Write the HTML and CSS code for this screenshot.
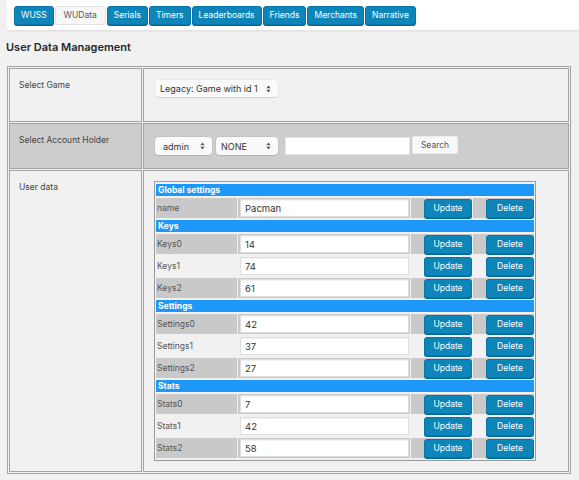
FILE: index.html
```html
<!DOCTYPE html>
<html lang="en">
<head>
<meta charset="utf-8">
<title>WUData – User Data Management</title>
<link rel="stylesheet" href="styles.css">
</head>
<body>
<div class="wrap">
  <nav class="tabs">
    <a class="tab">WUSS</a>
    <a class="tab tab-current">WUData</a>
    <a class="tab">Serials</a>
    <a class="tab">Timers</a>
    <a class="tab">Leaderboards</a>
    <a class="tab">Friends</a>
    <a class="tab">Merchants</a>
    <a class="tab">Narrative</a>
  </nav>

  <h2 class="title">User Data Management</h2>

  <table class="manage">
    <tr class="game">
      <th>Select Game</th>
      <td>
        <span class="picker picker-game">
          <select class="picker-field"><option>Legacy: Game with id 1</option></select>
          <svg class="picker-arrows" width="5" height="8" viewBox="0 0 5 8"><polygon points="0.4,3.3 2.5,0.4 4.6,3.3"/><polygon points="0.4,4.7 2.5,7.6 4.6,4.7"/></svg>
        </span>
      </td>
    </tr>
    <tr class="holder">
      <th>Select Account Holder</th>
      <td>
        <div class="holder-controls">
          <span class="picker picker-user">
            <select class="picker-field"><option>admin</option></select>
            <svg class="picker-arrows" width="5" height="8" viewBox="0 0 5 8"><polygon points="0.4,3.3 2.5,0.4 4.6,3.3"/><polygon points="0.4,4.7 2.5,7.6 4.6,4.7"/></svg>
          </span>
          <span class="picker picker-role">
            <select class="picker-field"><option>NONE</option></select>
            <svg class="picker-arrows" width="5" height="8" viewBox="0 0 5 8"><polygon points="0.4,3.3 2.5,0.4 4.6,3.3"/><polygon points="0.4,4.7 2.5,7.6 4.6,4.7"/></svg>
          </span>
          <input class="search-field" type="text">
          <button class="search-btn" type="button">Search</button>
        </div>
      </td>
    </tr>
    <tr class="userdata">
      <th>User data</th>
      <td>
        <table class="data">
          <tr class="group"><th colspan="4">Global settings</th></tr>
          <tr class="shade">
            <td class="key">name</td>
            <td class="val"><input type="text" value="Pacman"></td>
            <td class="act"><button class="btn" type="button">Update</button></td>
            <td class="act"><button class="btn" type="button">Delete</button></td>
          </tr>

          <tr class="group"><th colspan="4">Keys</th></tr>
          <tr class="shade">
            <td class="key">Keys0</td>
            <td class="val"><input type="text" value="14"></td>
            <td class="act"><button class="btn" type="button">Update</button></td>
            <td class="act"><button class="btn" type="button">Delete</button></td>
          </tr>
          <tr>
            <td class="key">Keys1</td>
            <td class="val"><input type="text" value="74"></td>
            <td class="act"><button class="btn" type="button">Update</button></td>
            <td class="act"><button class="btn" type="button">Delete</button></td>
          </tr>
          <tr class="shade">
            <td class="key">Keys2</td>
            <td class="val"><input type="text" value="61"></td>
            <td class="act"><button class="btn" type="button">Update</button></td>
            <td class="act"><button class="btn" type="button">Delete</button></td>
          </tr>

          <tr class="group"><th colspan="4">Settings</th></tr>
          <tr class="shade">
            <td class="key">Settings0</td>
            <td class="val"><input type="text" value="42"></td>
            <td class="act"><button class="btn" type="button">Update</button></td>
            <td class="act"><button class="btn" type="button">Delete</button></td>
          </tr>
          <tr>
            <td class="key">Settings1</td>
            <td class="val"><input type="text" value="37"></td>
            <td class="act"><button class="btn" type="button">Update</button></td>
            <td class="act"><button class="btn" type="button">Delete</button></td>
          </tr>
          <tr class="shade">
            <td class="key">Settings2</td>
            <td class="val"><input type="text" value="27"></td>
            <td class="act"><button class="btn" type="button">Update</button></td>
            <td class="act"><button class="btn" type="button">Delete</button></td>
          </tr>

          <tr class="group"><th colspan="4">Stats</th></tr>
          <tr class="shade">
            <td class="key">Stats0</td>
            <td class="val"><input type="text" value="7"></td>
            <td class="act"><button class="btn" type="button">Update</button></td>
            <td class="act"><button class="btn" type="button">Delete</button></td>
          </tr>
          <tr>
            <td class="key">Stats1</td>
            <td class="val"><input type="text" value="42"></td>
            <td class="act"><button class="btn" type="button">Update</button></td>
            <td class="act"><button class="btn" type="button">Delete</button></td>
          </tr>
          <tr class="shade">
            <td class="key">Stats2</td>
            <td class="val"><input type="text" value="58"></td>
            <td class="act"><button class="btn" type="button">Update</button></td>
            <td class="act"><button class="btn" type="button">Delete</button></td>
          </tr>
        </table>
      </td>
    </tr>
  </table>
</div>
</body>
</html>
```

FILE: styles.css
```css
* {
  box-sizing: border-box;
}

html,
body {
  margin: 0;
  padding: 0;
  background: #f1f1f1;
}

body {
  font-family: "Inter", "Liberation Sans", sans-serif;
  font-size: 8.5px;
  color: #444;
  overflow: hidden;
}

.wrap {
  padding-left: 7px;
}

/* ---- top tab strip ---- */
.tabs {
  display: flex;
  gap: 1px;
  background: #fff;
  padding: 6px 0 5px 7px;
  border-bottom: 1px solid #e2e2e2;
  box-shadow: 0 1px 1px rgba(0, 0, 0, 0.04);
}

.tab {
  display: block;
  height: 19px;
  padding: 0 6px;
  line-height: 17px;
  font-size: 8.5px;
  color: #fff;
  background: #0e85b9;
  border: 1px solid #0a74a6;
  border-radius: 3px;
  box-shadow: 0 1px 0 #006799;
  text-decoration: none;
}

.tab-current {
  padding: 0 8px;
  color: #555;
  background: #f7f7f7;
  border-color: #e2e2e2;
  box-shadow: none;
}

/* ---- heading ---- */
.title {
  margin: 9px 0 12px -1px;
  font-size: 11px;
  line-height: 14px;
  font-weight: 600;
  color: #23282d;
}

/* ---- outer management table ---- */
.manage {
  width: 564px;
  border: 1px solid #a3a3a3;
  border-spacing: 1px;
}

.manage > tbody > tr > th,
.manage > tbody > tr > td {
  border: 1px solid #a3a3a3;
  padding: 10px 11px;
  vertical-align: top;
  text-align: left;
}

.manage > tbody > tr > th {
  width: 133px;
  padding-left: 9px;
  font-weight: normal;
  color: #444;
  line-height: 12px;
}

.game > th,
.game > td {
  height: 54px;
}

.holder > th,
.holder > td {
  background: #cdcdcd;
}

.userdata > td {
  padding-left: 10px !important;
}

/* ---- select boxes ---- */
.picker {
  position: relative;
  display: inline-block;
  height: 17px;
  margin-top: 1px;
  background: #fafafa;
  border-radius: 4px;
  box-shadow: 0 0 0 0.5px rgba(0, 0, 0, 0.08), 0 1px 1px rgba(0, 0, 0, 0.1);
}

.picker-field {
  display: block;
  width: 100%;
  height: 100%;
  margin: 0;
  padding: 0 14px 0 5px;
  border: 0;
  background: transparent;
  appearance: none;
  -webkit-appearance: none;
  font-family: inherit;
  font-size: 9px;
  color: #333;
  outline: none;
}

.picker-arrows {
  position: absolute;
  right: 7px;
  top: 4.5px;
  fill: #555;
  pointer-events: none;
}

.picker-game {
  width: 123px;
}

.holder-controls {
  display: flex;
  align-items: flex-start;
  margin: 3px 0;
  height: 18px;
}

.picker-user {
  width: 57px;
  height: 18px;
  margin-top: 0;
}

.picker-role {
  width: 62px;
  height: 18px;
  margin: 0 0 0 4px;
}

.picker-user .picker-field {
  padding-left: 8px;
}

.picker-role .picker-field {
  padding-left: 5px;
}

.search-field {
  width: 125px;
  height: 18px;
  margin-left: 7px;
  border: 1px solid #e4e4e4;
  background: #fff;
  padding: 0 3px;
  font-family: inherit;
  font-size: 9.5px;
}

.search-btn {
  width: 46px;
  height: 18px;
  margin: -1px 0 0 2px;
  padding: 0;
  border: 1px solid #ececec;
  border-radius: 2px;
  background: #f8f8f8;
  font-family: inherit;
  font-size: 8.5px;
  color: #555;
}

/* ---- nested user data table ---- */
.data {
  border: 1px solid #9a9a9a;
  border-spacing: 1px 2px;
}

.data td,
.data th {
  padding: 0;
}

.group th {
  height: 12px;
  padding-left: 2px;
  background: #1e98f8;
  color: #fff;
  font-weight: 700;
  font-size: 8.5px;
  line-height: 12px;
  text-align: left;
}

.data td {
  height: 20px;
  vertical-align: middle;
}

.shade td {
  background: #c9c9c9;
}

.key {
  width: 81px;
  padding-left: 1px !important;
  color: #555;
}

.val {
  width: 172px;
}

.val input {
  display: block;
  width: 169px;
  height: 18px;
  margin: 0 0 0 2px;
  padding: 0 4px;
  border: 1px solid #dedede;
  background: #fff;
  box-shadow: inset 0 1px 1px rgba(0, 0, 0, 0.05);
  font-family: inherit;
  font-size: 9.5px;
  color: #333;
}

.act {
  width: 61px;
}

.btn {
  display: block;
  width: 48px;
  height: 19px;
  margin: 0 0 0 auto;
  padding: 0;
  border: 1px solid #0a74a6;
  border-radius: 3px;
  background: #0e85b9;
  box-shadow: 0 1px 0 #006799;
  color: #fff;
  font-family: inherit;
  font-size: 8.5px;
}
```
